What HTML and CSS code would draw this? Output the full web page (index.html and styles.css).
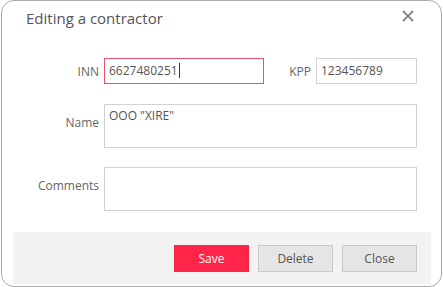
FILE: index.html
```html
<!DOCTYPE html>
<html lang="en">
<head>
  <meta charset="UTF-8" />
  <title>Editing a contractor</title>
  <link rel="stylesheet" href="styles.css">
</head>
<body>

  <div class="dialog">
    <div class="dialog-header">
      <div class="dialog-title">Editing a contractor</div>
      <svg class="close-x" width="12" height="12" viewBox="0 0 12 12">
        <path d="M1 1 L11 11 M11 1 L1 11" stroke="#8a8a8a" stroke-width="2" fill="none"/>
      </svg>
    </div>

    <div class="form">
      <!-- INN / KPP -->
      <div class="row">
        <div class="label">INN</div>
        <div class="field-line">
          <div class="field field-inn error">6627480251<span class="caret"></span></div>
          <div class="label label-kpp">KPP</div>
          <div class="field field-kpp">123456789</div>
        </div>
      </div>

      <!-- Name -->
      <div class="row">
        <div class="label label-top">Name</div>
        <div class="field field-area">OOO "XIRE"</div>
      </div>

      <!-- Comments -->
      <div class="row row-comments">
        <div class="label label-top">Comments</div>
        <div class="field field-area"></div>
      </div>
    </div>

    <div class="dialog-footer">
      <button class="btn btn-primary">Save</button>
      <button class="btn">Delete</button>
      <button class="btn">Close</button>
    </div>
  </div>

</body>
</html>
```

FILE: styles.css
```css
body {
  margin: 0;
  font-family: 'Open Sans', 'Noto Sans', sans-serif;
  background: white;
  color: #555;
}

.dialog {
  box-sizing: border-box;
  width: 441px;
  height: 287px;
  margin-left: 1px;
  border: 1px solid #aaa;
  border-radius: 13px;
  padding: 0 10px 1px 11px;
  display: flex;
  flex-direction: column;
}

.dialog-header {
  display: flex;
  justify-content: space-between;
  align-items: flex-start;
  height: 57px;
}

.dialog-title {
  font-size: 15px;
  line-height: 20px;
  color: #555;
  padding: 7px 0 0 13px;
}

.close-x {
  margin: 9px 17px 0 0;
}

.form {
  display: flex;
  flex-direction: column;
  gap: 20px;
  padding-right: 14px;
}

.row {
  display: grid;
  grid-template-columns: 86px 1fr;
  column-gap: 5px;
  align-items: center;
}

.row-comments {
  margin-top: -1px;
}

.label {
  font-size: 12px;
  color: #666;
  text-align: right;
}

.label-top {
  align-self: start;
  padding-top: 10px;
}

.field-line {
  display: flex;
  align-items: center;
}

.field {
  box-sizing: border-box;
  border: 1px solid #d2d2d2;
  background: white;
  font-size: 12px;
  line-height: 16px;
  color: #555;
  padding: 4px 4px;
}

.field-inn {
  width: 160px;
  height: 26px;
}

.field.error {
  border-color: #e8506a;
}

.caret {
  display: inline-block;
  width: 1px;
  height: 15px;
  background: #333;
  vertical-align: -3px;
  margin-left: 1px;
}

.label-kpp {
  margin-left: auto;
  margin-right: 5px;
}

.field-kpp {
  width: 101px;
  height: 26px;
}

.field-area {
  height: 44px;
  padding-top: 3px;
}

.dialog-footer {
  margin-top: auto;
  margin-bottom: 1px;
  height: 52px;
  background: #f2f2f2;
  display: flex;
  justify-content: flex-end;
  align-items: flex-start;
  gap: 9px;
  padding: 13px 14px 0 0;
  box-sizing: border-box;
}

.btn {
  width: 75px;
  height: 27px;
  font-family: inherit;
  font-size: 12px;
  color: #555;
  background: #e5e5e5;
  border: 1px solid #c9c9c9;
  padding: 0;
  cursor: pointer;
}

.btn-primary {
  background: #ff2548;
  border-color: #ff2548;
  color: white;
}
```
